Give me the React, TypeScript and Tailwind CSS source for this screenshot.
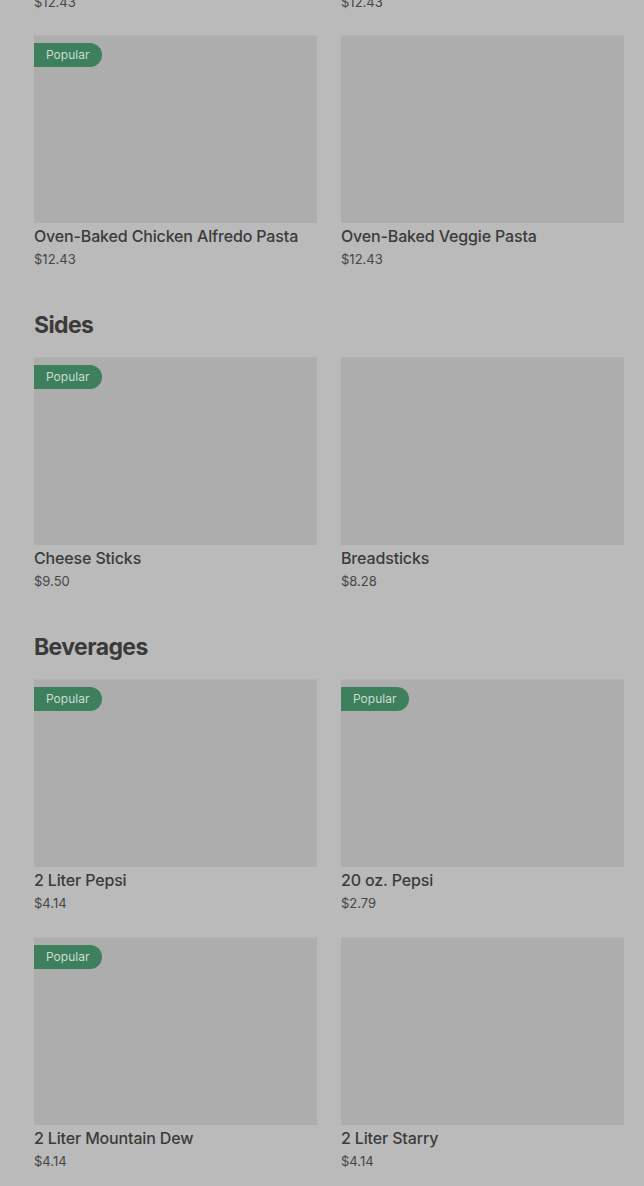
import React from "react";

type Item = { name: string; price: string; popular?: boolean };

const Card = ({ item }: { item: Item }) => (
  <div className="flex flex-col">
    <div className="relative h-[188px] bg-[#adadad] border-t-[1px] border-[#b3b3b3]">
      {item.popular && (
        <div className="absolute left-0 top-[7px] h-[24px] w-[68px] rounded-r-full bg-[#3e7f5e] flex items-center pl-[12px] text-[12px] leading-none text-[#c9ded2]">
          Popular
        </div>
      )}
    </div>
    <div className="mt-[1px] text-[16px] leading-[24px] font-medium text-[#3b3b3b] tracking-[-0.15px]">{item.name}</div>
    <div className="mt-[2px] text-[13px] leading-[18px] text-[#464646]">{item.price}</div>
  </div>
);

const Section = ({ title, items }: { title: string; items: Item[] }) => (
  <div className="flex flex-col">
    <h2 className="text-[23px] leading-[28px] font-bold text-[#3a3a3a] tracking-[-0.6px] mt-[43px] mb-[18px]">{title}</h2>
    <div className="grid grid-cols-2 gap-x-[24px] gap-y-[25px]">
      {items.map((it) => (
        <Card key={it.name} item={it} />
      ))}
    </div>
  </div>
);

export default function App() {
  return (
    <div
      className="w-[644px] h-[1186px] overflow-hidden bg-[#bababa] pl-[34px] pr-[20px]"
      style={{ fontFamily: "Inter, 'Noto Sans', sans-serif" }}
    >
      <div className="mt-[-7px] grid grid-cols-2 gap-x-[24px] text-[13px] leading-[18px] text-[#464646]">
        <div>$12.43</div>
        <div>$12.43</div>
      </div>
      <div className="mt-[24px] grid grid-cols-2 gap-x-[24px]">
        <Card item={{ name: "Oven-Baked Chicken Alfredo Pasta", price: "$12.43", popular: true }} />
        <Card item={{ name: "Oven-Baked Veggie Pasta", price: "$12.43" }} />
      </div>
      <Section
        title="Sides"
        items={[
          { name: "Cheese Sticks", price: "$9.50", popular: true },
          { name: "Breadsticks", price: "$8.28" },
        ]}
      />
      <Section
        title="Beverages"
        items={[
          { name: "2 Liter Pepsi", price: "$4.14", popular: true },
          { name: "20 oz. Pepsi", price: "$2.79", popular: true },
          { name: "2 Liter Mountain Dew", price: "$4.14", popular: true },
          { name: "2 Liter Starry", price: "$4.14" },
        ]}
      />
    </div>
  );
}
